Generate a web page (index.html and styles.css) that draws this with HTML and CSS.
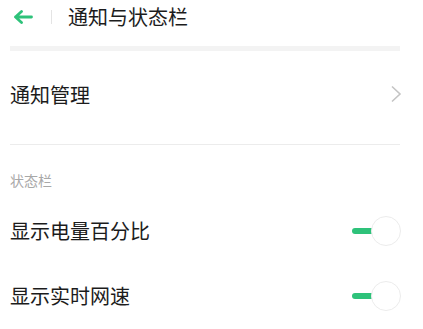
FILE: index.html
```html
<!DOCTYPE html>
<html lang="zh-CN">
<head>
  <meta charset="UTF-8" />
  <meta name="viewport" content="width=device-width, initial-scale=1.0"/>
  <title>通知与状态栏</title>
  <link rel="stylesheet" href="styles.css">
</head>
<body>

<div class="header">
  <svg class="back" width="20" height="14" viewBox="0 0 20 14">
    <path d="M2.5 7 H18.5 M8.5 1.5 L2.5 7 L8.5 12.5" fill="none" stroke="#2ec27a" stroke-width="2.8" stroke-linecap="round" stroke-linejoin="round"/>
  </svg>
  <span class="sep"></span>
  <span class="title">通知与状态栏</span>
</div>
<div class="band"></div>

<div class="row nav-row">
  <span class="label">通知管理</span>
  <svg class="chevron" width="12" height="18" viewBox="0 0 12 18">
    <polyline points="2,1.5 10,9 2,16.5" fill="none" stroke="#c4c4c4" stroke-width="1.6"/>
  </svg>
</div>
<div class="divider"></div>

<div class="section">状态栏</div>

<div class="switches">
  <div class="row switch-row">
    <span class="label">显示电量百分比</span>
    <span class="toggle"><span class="track"></span><span class="knob"></span></span>
  </div>
  <div class="row switch-row">
    <span class="label">显示实时网速</span>
    <span class="toggle"><span class="track"></span><span class="knob"></span></span>
  </div>
</div>

</body>
</html>
```

FILE: styles.css
```css
body {
  margin: 0;
  background: #fff;
  font-family: "Noto Sans CJK SC", "Noto Sans", sans-serif;
  color: #1c1c1c;
}
.header {
  display: flex;
  align-items: center;
  height: 34px;
  padding-left: 13px;
}
.back {
  display: block;
}
.sep {
  width: 1px;
  height: 14px;
  background: #e4e4e4;
  margin: 0 16px 0 18px;
}
.title {
  font-size: 20px;
  line-height: 34px;
}
.band {
  height: 5px;
  margin: 12px 23px 0 10px;
  background: #f3f3f3;
}
.row {
  display: flex;
  align-items: center;
  justify-content: space-between;
  padding: 0 21px 0 10px;
}
.label {
  font-size: 20px;
}
.nav-row {
  height: 60px;
  margin-top: 13px;
}
.divider {
  height: 1px;
  margin: 20px 23px 0 10px;
  background: #ececec;
}
.section {
  margin: 25px 0 0 10px;
  font-size: 14px;
  line-height: 20px;
  color: #a8a8a8;
}
.switches {
  margin-top: 8px;
}
.switch-row {
  height: 65px;
  padding-right: 22px;
}
.toggle {
  position: relative;
  width: 49px;
  height: 30px;
}
.track {
  position: absolute;
  left: 0;
  top: 12px;
  width: 24px;
  height: 6px;
  border-radius: 3px;
  background: #2ec27a;
}
.knob {
  position: absolute;
  right: 0;
  top: 0;
  width: 28px;
  height: 28px;
  border: 1px solid #ececec;
  border-radius: 50%;
  background: #fff;
}
```
